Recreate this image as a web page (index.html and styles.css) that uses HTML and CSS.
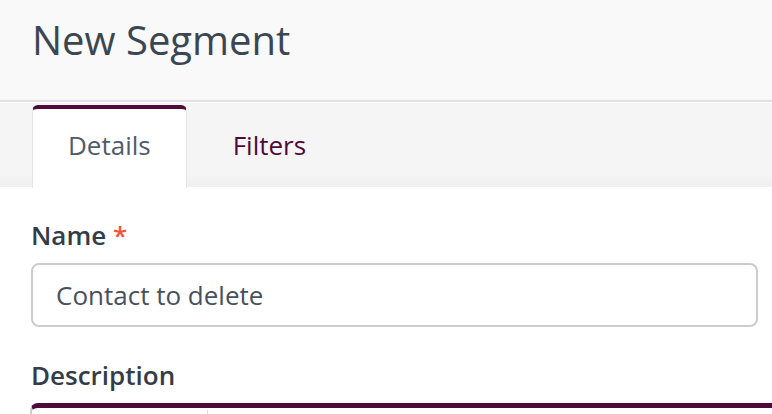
FILE: index.html
```html
<!DOCTYPE html>
<html lang="en">
<head>
    <meta charset="UTF-8">
    <meta name="viewport" content="width=device-width, initial-scale=1.0">
    <title>New Segment</title>
    <link rel="stylesheet" href="styles.css">
</head>
<body>

<!-- Page header -->
<header class="page-header">
    <h1>New Segment</h1>
</header>

<!-- Tabs -->
<nav class="tabs">
    <a href="#details" class="tab active">Details</a>
    <a href="#filters" class="tab">Filters</a>
</nav>

<!-- Details form -->
<section class="content">
    <form id="segmentForm">
        <label for="name" class="field-label">Name <span class="required">*</span></label>
        <input type="text" id="name" name="name" class="field-input" value="Contact to delete">

        <label for="description" class="field-label">Description</label>
        <div class="editor">
            <div class="editor-toolbar">
                <div class="tool-group"></div>
            </div>
        </div>
    </form>
</section>

</body>
</html>
```

FILE: styles.css
```css
/* Styles */
html, body {
    overflow: hidden;
}

body {
    font-family: "Open Sans", "Liberation Sans", sans-serif;
    margin: 0;
    padding: 0;
    background-color: #fff;
    color: #333d48;
}

.page-header {
    height: 88px;
    padding: 12px 0 0 32px;
    background-color: #f9f9f9;
    border-bottom: 2px solid #e0e0e6;
}

.page-header h1 {
    margin: 0;
    font-size: 40px;
    line-height: 55px;
    font-weight: 400;
    color: #3b4652;
}

.tabs {
    display: flex;
    align-items: flex-end;
    height: 84px;
    margin-top: 1px;
    padding-left: 32px;
    background: linear-gradient(to bottom, #f5f5f5 85%, #eeeeee 100%);
}

.tab {
    display: block;
    height: 36px;
    padding: 18px 37px 25px;
    margin-bottom: -1px;
    font-size: 26px;
    line-height: 36px;
    color: #4d0a3a;
    text-decoration: none;
}

.tab + .tab {
    margin-left: 9px;
}

.tab.active {
    background-color: #fff;
    color: #4f5c6c;
    border-top: 4px solid #4d0a3a;
    border-left: 1px solid #e4e4ea;
    border-right: 1px solid #e4e4ea;
    border-radius: 6px 6px 0 0;
    padding-left: 35px;
    padding-right: 35px;
}

.content {
    padding: 30px 0 0 31px;
}

.field-label {
    display: block;
    font-size: 26px;
    line-height: 36px;
    font-weight: 600;
    color: #333d48;
    margin-bottom: 10px;
}

.required {
    color: #f2553a;
}

.field-input {
    display: block;
    box-sizing: border-box;
    width: 727px;
    height: 64px;
    margin-bottom: 30px;
    padding: 0 23px;
    font-family: inherit;
    font-size: 26px;
    color: #46505e;
    border: 2px solid #cccccc;
    border-radius: 8px;
    background-color: #fff;
}

.editor {
    width: 800px;
    height: 60px;
    margin-left: -1px;
    border-top: 5px solid #4d0a3a;
    border-left: 2px solid #cccccc;
    border-radius: 8px 8px 0 0;
}

.editor-toolbar {
    display: flex;
    padding-top: 2px;
}

.tool-group {
    width: 175px;
    height: 40px;
    border-right: 1px solid #dddddd;
}
```
